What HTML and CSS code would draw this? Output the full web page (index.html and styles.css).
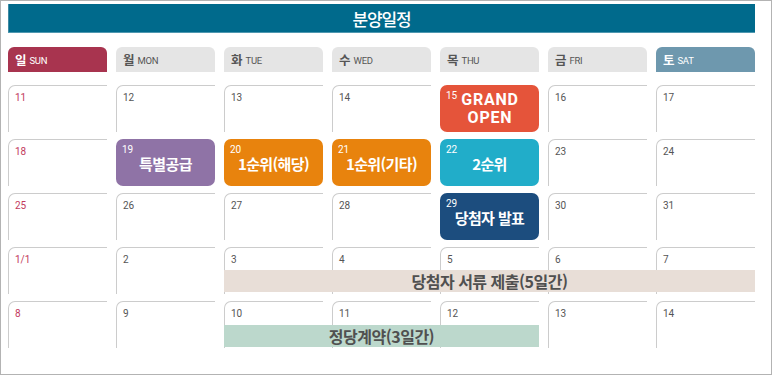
FILE: index.html
```html
<!DOCTYPE html>
<html lang="ko">
<head>
<meta charset="utf-8">
<title>분양일정</title>
<link rel="stylesheet" href="styles.css">
</head>
<body>
<div class="frame">
  <div class="title">분양일정</div>

  <div class="days">
    <div class="day sun"><b>일</b><span>SUN</span></div>
    <div class="day"><b>월</b><span>MON</span></div>
    <div class="day"><b>화</b><span>TUE</span></div>
    <div class="day"><b>수</b><span>WED</span></div>
    <div class="day"><b>목</b><span>THU</span></div>
    <div class="day"><b>금</b><span>FRI</span></div>
    <div class="day sat"><b>토</b><span>SAT</span></div>
  </div>

  <div class="weeks">
    <div class="week">
      <div class="cell sunday"><span class="num">11</span></div>
      <div class="cell"><span class="num">12</span></div>
      <div class="cell"><span class="num">13</span></div>
      <div class="cell"><span class="num">14</span></div>
      <div class="cell event open"><span class="enum">15</span><span class="grand">GRAND<br>OPEN</span></div>
      <div class="cell"><span class="num">16</span></div>
      <div class="cell"><span class="num">17</span></div>
    </div>
    <div class="week">
      <div class="cell sunday"><span class="num">18</span></div>
      <div class="cell event special"><span class="enum">19</span><span class="etitle">특별공급</span></div>
      <div class="cell event first"><span class="enum">20</span><span class="etitle">1순위(해당)</span></div>
      <div class="cell event first"><span class="enum">21</span><span class="etitle">1순위(기타)</span></div>
      <div class="cell event second"><span class="enum">22</span><span class="etitle">2순위</span></div>
      <div class="cell"><span class="num">23</span></div>
      <div class="cell"><span class="num">24</span></div>
    </div>
    <div class="week">
      <div class="cell sunday"><span class="num">25</span></div>
      <div class="cell"><span class="num">26</span></div>
      <div class="cell"><span class="num">27</span></div>
      <div class="cell"><span class="num">28</span></div>
      <div class="cell event winner"><span class="enum">29</span><span class="etitle">당첨자 발표</span></div>
      <div class="cell"><span class="num">30</span></div>
      <div class="cell"><span class="num">31</span></div>
    </div>
    <div class="week">
      <div class="cell sunday"><span class="num">1/1</span></div>
      <div class="cell"><span class="num">2</span></div>
      <div class="cell"><span class="num">3</span></div>
      <div class="cell"><span class="num">4</span></div>
      <div class="cell"><span class="num">5</span></div>
      <div class="cell"><span class="num">6</span></div>
      <div class="cell"><span class="num">7</span></div>
      <div class="bar docs">당첨자 서류 제출(5일간)</div>
    </div>
    <div class="week">
      <div class="cell sunday"><span class="num">8</span></div>
      <div class="cell"><span class="num">9</span></div>
      <div class="cell"><span class="num">10</span></div>
      <div class="cell"><span class="num">11</span></div>
      <div class="cell"><span class="num">12</span></div>
      <div class="cell"><span class="num">13</span></div>
      <div class="cell"><span class="num">14</span></div>
      <div class="bar contract">정당계약(3일간)</div>
    </div>
  </div>
</div>
</body>
</html>
```

FILE: styles.css
```css
* { box-sizing: border-box; }

body {
  margin: 0;
  background: #ffffff;
  font-family: Roboto, "Noto Sans CJK KR", sans-serif;
}

.frame {
  width: 772px;
  height: 375px;
  border: 1px solid #b3b3b3;
  padding: 3px 0 0 7px;
  background: #fff;
}

.title {
  width: 747px;
  height: 29px;
  background: #006a8c;
  box-shadow: inset 0 -1px 0 #4f98b0, inset 1px 0 0 #3f8aa3;
  color: #fff;
  font-family: "Noto Sans CJK KR", sans-serif;
  font-size: 17px;
  font-weight: 500;
  letter-spacing: -1.2px;
  line-height: 29px;
  text-align: center;
}

.days {
  display: grid;
  grid-template-columns: repeat(7, 99px);
  column-gap: 9px;
  margin-top: 14px;
  width: 747px;
}

.day {
  height: 25px;
  border-radius: 6px 6px 0 0;
  background: #e5e5e5;
  color: #555;
  display: flex;
  align-items: center;
  gap: 3px;
  padding: 0 0 0 7px;
}

.day b {
  font-family: "Noto Sans CJK KR", sans-serif;
  font-size: 12.5px;
  font-weight: 700;
}

.day span {
  font-size: 9.5px;
  padding-top: 2px;
  letter-spacing: -0.3px;
}

.day.sun { background: #a8344f; color: #fff; }
.day.sat { background: #6e98ae; color: #fff; }

.weeks {
  display: flex;
  flex-direction: column;
  gap: 7px;
  margin-top: 13px;
  width: 747px;
}

.week {
  display: grid;
  grid-template-columns: repeat(7, 99px);
  column-gap: 9px;
  height: 47px;
}

.week > * { grid-row: 1; }
.week > .cell:nth-child(1) { grid-column: 1; }
.week > .cell:nth-child(2) { grid-column: 2; }
.week > .cell:nth-child(3) { grid-column: 3; }
.week > .cell:nth-child(4) { grid-column: 4; }
.week > .cell:nth-child(5) { grid-column: 5; }
.week > .cell:nth-child(6) { grid-column: 6; }
.week > .cell:nth-child(7) { grid-column: 7; }

.cell {
  position: relative;
  border-top: 1px solid #cccccc;
  border-left: 1px solid #cccccc;
  border-top-left-radius: 7px;
  padding: 6px 0 0 6px;
}

.num {
  display: block;
  font-size: 10px;
  line-height: 12px;
  color: #555;
}

.cell.sunday .num { color: #c23a5d; }

.cell.event {
  border: none;
  border-radius: 7px;
  padding: 0;
  display: flex;
  align-items: center;
  justify-content: center;
  color: #fff;
}

.enum {
  position: absolute;
  top: 5px;
  left: 6px;
  font-size: 10px;
  line-height: 12px;
  color: #fff;
}

.etitle {
  font-family: "Noto Sans CJK KR", sans-serif;
  font-size: 15px;
  font-weight: 700;
  letter-spacing: -0.6px;
  line-height: 18px;
  padding-top: 2px;
}

.grand {
  font-family: Roboto, sans-serif;
  font-size: 16px;
  font-weight: 700;
  line-height: 18px;
  letter-spacing: 0.8px;
  text-align: center;
  padding-left: 1px;
}

.open { background: #e5543a; }
.special { background: #8f73a6; }
.first { background: #e8830d; }
.second { background: #21adc9; }
.winner { background: #1c4d7e; }

.bar {
  align-self: end;
  height: 22px;
  margin-bottom: 2px;
  z-index: 1;
  font-family: "Noto Sans CJK KR", sans-serif;
  font-size: 16px;
  font-weight: 700;
  letter-spacing: -0.5px;
  line-height: 22px;
  color: #505050;
  text-align: center;
}

.bar.docs {
  grid-column: 3 / 8;
  background: #e8ded7;
}

.bar.contract {
  grid-column: 3 / 6;
  background: #bcd8cc;
  margin-bottom: 1px;
}
```
